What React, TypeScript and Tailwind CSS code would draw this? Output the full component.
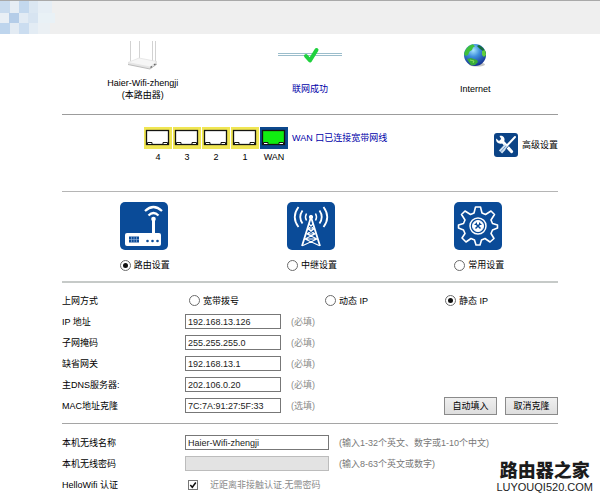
import React from "react";

const radioClass =
  "m-0 grid h-[11px] w-[11px] shrink-0 appearance-none place-items-center rounded-full border border-[#6b6b6b] bg-white before:h-[5px] before:w-[5px] before:rounded-full checked:before:bg-[#111]";

function CornerMosaic() {
  return (
    <svg width="60" height="33" viewBox="0 0 60 33" aria-hidden="true">
      <rect width="10" height="12" fill="#c9dbee" />
      <rect x="10" width="9" height="12" fill="#e6edf4" />
      <rect x="19" width="10" height="12" fill="#c3d8ee" />
      <rect x="29" width="9" height="12" fill="#dbe7f2" />
      <rect x="38" width="14" height="12" fill="#e6eef5" />
      <rect y="12" width="9" height="10" fill="#e9eff5" />
      <rect x="9" y="12" width="10" height="10" fill="#b5cde8" />
      <rect x="19" y="12" width="9" height="10" fill="#e2ebf4" />
      <rect x="28" y="12" width="10" height="10" fill="#d7e4f1" />
      <rect x="38" y="12" width="17" height="10" fill="#e9f1f6" />
      <rect y="22" width="10" height="11" fill="#bed5ed" />
      <rect x="10" y="22" width="9" height="11" fill="#e3ebf3" />
      <rect x="19" y="22" width="10" height="11" fill="#cbddf0" />
      <rect x="29" y="22" width="9" height="11" fill="#e3ecf4" />
      <rect x="38" y="22" width="12" height="11" fill="#ebf0f4" />
    </svg>
  );
}

function RouterPicture() {
  return (
    <svg width="32" height="30" viewBox="0 0 32 30" aria-hidden="true" fill="none">
      <path d="M3.500 1v20M12.500 1v18M25.500 1v22M28.500 1v21" stroke="#d2d2d2" strokeWidth="1" />
      <path d="M1 22.500 12 18l18 3.500L23 27z" fill="#f6f6f6" stroke="#e0e0e0" strokeWidth=".7" />
      <path d="M1 22.500v2L23 29l7-5.500v-2L23 27z" fill="#e4e4e4" />
      <path d="M1 24.500 23 29l7-5" stroke="#b5b5b5" strokeWidth=".9" />
      <path d="m23.500 27.500 1.500-1m2-1.500 1.500-1" stroke="#666" strokeWidth="1.500" />
    </svg>
  );
}

function LinkPicture() {
  return (
    <svg width="66" height="18" viewBox="0 0 66 18" aria-hidden="true" fill="none">
      <path d="M1 6.500h64M1 8.500h64" stroke="#9bbdcb" />
      <path d="m29 9 4 4.500L39.500 3" stroke="#20d13e" strokeWidth="4" strokeLinecap="round" strokeLinejoin="round" />
    </svg>
  );
}

function Globe() {
  return (
    <svg width="24" height="24" viewBox="0 0 24 24" aria-hidden="true">
      <defs>
        <radialGradient id="sea" cx=".42" cy=".28" r=".75">
          <stop offset="0" stopColor="#a9e6ff" />
          <stop offset=".4" stopColor="#3e8fdc" />
          <stop offset="1" stopColor="#122c8c" />
        </radialGradient>
      </defs>
      <ellipse cx="14" cy="21.500" rx="8" ry="2" fill="#c4c4c4" />
      <circle cx="12" cy="12" r="11" fill="url(#sea)" />
      <path d="M2 8C4 4 7 1.500 10 1.200l2 2-2 1.300L9 7 6.500 8.500 5 12 2.500 13 1 11z" fill="#3fc03c" />
      <path d="m14 3 2-1c4 2 6.500 5 7 9l-1.500 3L19 11l1-3-3-2z" fill="#166d3c" />
      <path d="m19 8 3-1 1 5-2 2-2-2z" fill="#60ce3c" />
      <path d="m4 16 4-1 6 2 1 2-3 3-4 .3z" fill="#38ac3a" />
      <path d="m7 17 4 1-1 2" fill="none" stroke="#8be05a" />
    </svg>
  );
}

function Port({ label, wan = false }: { label: string; wan?: boolean }) {
  return (
    <div className="flex flex-col items-center">
      <svg width="28" height="22" viewBox="0 0 28 22" aria-hidden="true">
        <rect width="28" height="22" fill={wan ? "#0c488d" : "#f0e653"} />
        <rect x="2.500" y="3.500" width="22" height="14" fill={wan ? "#11ed11" : "#fff"} stroke="#151510" strokeWidth="1.300" />
        <path d="M3.500 17v-1.500h4.500v1.500m11 0v-1.500h4.500v1.500" fill="#fff" stroke="#151510" />
      </svg>
      <span className="mt-px leading-[14px]">{label}</span>
    </div>
  );
}

function ToolsIcon() {
  return (
    <svg width="24" height="24" viewBox="0 0 24 24" aria-hidden="true" fill="none">
      <rect width="24" height="24" rx="3" fill="#0b4386" />
      <path d="m8 8 9.500 10.500" stroke="#fff" strokeWidth="3.200" strokeLinecap="round" />
      <path d="M5.500 3c3-.8 5.500 1.500 5 4.500l-2.500 3C4.500 11.500 1.500 9 2.200 5.500L5 8l2.200-2z" fill="#fff" />
      <path d="m21 4-7.500 8" stroke="#fff" strokeWidth="2" strokeLinecap="round" />
      <path d="m12.500 12.500-6 6.500" stroke="#d3e3f2" strokeWidth="4.400" />
      <path d="m11.700 13.300-5 5.500" stroke="#5f8cbd" strokeWidth=".9" />
      <path d="m15 12.500-3.500 4" stroke="#0b4386" strokeWidth=".8" />
    </svg>
  );
}

function RouteIcon() {
  return (
    <svg width="48" height="48" viewBox="0 0 48 48" aria-hidden="true" fill="none">
      <rect width="48" height="48" rx="5" fill="#0a4b98" />
      <rect x="5" y="31" width="36" height="13" rx="2" fill="#fff" />
      <path d="M33.500 18v13" stroke="#fff" strokeWidth="3" />
      <circle cx="33.500" cy="17" r="2.300" fill="#fff" />
      <path d="M28.500 13.500q5-5 10 0M25 9q8.500-8 17 0" stroke="#fff" strokeWidth="2.200" />
      <path d="M9 34.500h10v6H9z" fill="#0a4b98" />
      <path d="M9 37.500h10M11.500 34.500v6m2.500-6v6m2.500-6v6" stroke="#9dbbe0" strokeWidth=".6" />
      <circle cx="27.500" cy="39" r="1.300" fill="#0a4b98" />
      <circle cx="32.500" cy="39" r="1.300" fill="#0a4b98" />
      <circle cx="37.500" cy="39" r="1.300" fill="#0a4b98" />
    </svg>
  );
}

function TowerIcon() {
  return (
    <svg width="48" height="48" viewBox="0 0 48 48" aria-hidden="true" fill="none">
      <rect width="48" height="48" rx="5" fill="#0a4b98" />
      <g stroke="#fff">
        <circle cx="24" cy="15" r="1.700" fill="#fff" />
        <path d="M24 15 15 44M24 15l9 29" strokeWidth="1.800" />
        <path d="m22 22 5 5-7 5 10 5-14 6.500M26 22l-5 5 7 5-10 5 14 6.500M21 27h6M19.500 32h9M18 37h12" strokeWidth="1.100" />
        <path d="M19.500 11.500q-2 3.500 0 7M28.500 11.500q2 3.500 0 7" strokeWidth="1.500" />
        <path d="M15.500 8.500q-4.500 6.500 0 13M32.500 8.500q4.500 6.500 0 13" strokeWidth="1.800" />
        <path d="M11.500 5q-7.500 10 0 20M36.500 5q7.500 10 0 20" strokeWidth="1.800" />
      </g>
    </svg>
  );
}

function GearIcon() {
  return (
    <svg width="48" height="48" viewBox="0 0 48 48" aria-hidden="true" fill="none">
      <rect width="48" height="48" rx="5" fill="#0a4b98" />
      <g stroke="#fff">
        <path
          d="M21.500 5h5l1.500 6 3.500 1.500L37 9l3.500 3.500-3.500 5.500 1.500 3.500 5 1.500v3l-5 2-1.500 3.500 3 5L36 40l-5-3.500-3.500 1.500-1.500 5h-4l-1.500-5-3.500-1.500-5 3.500L8 36l3-4.500L9.500 28l-5-2v-3l5-1.500L11 18l-3.500-5.500L11 9l5.500 3.500L20 11z"
          strokeWidth="1.600"
          strokeLinejoin="round"
        />
        <circle cx="24" cy="24" r="8" strokeWidth="1.500" />
        <circle cx="24" cy="24" r="5.500" fill="#fff" />
      </g>
      <path d="m21.500 21.500 5 5m0-5-5 5" stroke="#0a4b98" strokeWidth="1.500" />
      <path d="M20.500 22.500h2v-2m3 0v2h2" stroke="#0a4b98" />
    </svg>
  );
}

const addressFields = [
  { id: "ip", label: "IP 地址", value: "192.168.13.126", hint: "(必填)" },
  { id: "mask", label: "子网掩码", value: "255.255.255.0", hint: "(必填)" },
  { id: "gateway", label: "缺省网关", value: "192.168.13.1", hint: "(必填)" },
  { id: "dns", label: "主DNS服务器:", value: "202.106.0.20", hint: "(必填)" },
  { id: "mac", label: "MAC地址克隆", value: "7C:7A:91:27:5F:33", hint: "(选填)" },
];

const modes = [
  { label: "路由设置", Icon: RouteIcon },
  { label: "中继设置", Icon: TowerIcon },
  { label: "常用设置", Icon: GearIcon },
];

const buttonClass =
  "h-[18px] w-[53px] border border-[#8a8a8a] bg-linear-to-b from-[#efefef] to-[#dedede] text-center leading-4";

export default function App() {
  return (
    <div className="relative min-h-screen overflow-hidden bg-white font-['Liberation_Sans','Noto_Sans_CJK_SC',sans-serif] text-[9px] leading-3 text-black">
      <header className="h-[34px] border-t border-[#a9a9a9] bg-[#efefef]">
        <CornerMosaic />
      </header>

      <main className="mr-[42px] ml-[62px]">
        <section className="grid h-[81px] grid-cols-3 border-b border-[#9c9c9c] pt-1.5 text-center">
          <div className="flex flex-col items-center pr-1">
            <RouterPicture />
            <p className="mt-[7px] leading-3">
              Haier-Wifi-zhengji
              <br />
              (本路由器)
            </p>
          </div>
          <div className="flex flex-col items-center pt-[7px]">
            <LinkPicture />
            <p className="mt-[18px] text-[#0000a8]">联网成功</p>
          </div>
          <div className="flex flex-col items-center pt-[3px]">
            <Globe />
            <p className="mt-4">Internet</p>
          </div>
        </section>

        <section className="flex h-[77px] items-start border-b border-[#b5b5b5] pt-3">
          <div className="ml-[82px] flex gap-px">
            <Port label="4" />
            <Port label="3" />
            <Port label="2" />
            <Port label="1" />
            <Port label="WAN" wan />
          </div>
          <p className="mt-[5px] ml-1 text-[#0000a8]">WAN 口已连接宽带网线</p>
          <a href="#advanced" className="mt-1.5 ml-auto flex items-center gap-1">
            <ToolsIcon />
            高级设置
          </a>
        </section>

        <section className="h-[91px] border-b-2 border-[#c6cac8] pt-2.5">
          <div className="-mr-1.5 grid grid-cols-3">
            {modes.map(({ label, Icon }, index) => (
              <label key={label} className="mx-auto flex w-[52px] flex-col gap-[9px]">
                <Icon />
                <span className="flex items-center gap-[3px] whitespace-nowrap">
                  <input type="radio" name="mode" defaultChecked={index === 0} className={radioClass} />
                  {label}
                </span>
              </label>
            ))}
          </div>
        </section>

        <form>
          <div className="border-b border-[#a5a5a5] pt-[7px] pb-[7px]">
            <div role="radiogroup" aria-label="上网方式" className="flex h-[21px] items-center">
              <span className="w-[127px]">上网方式</span>
              <label className="flex w-[136px] items-center gap-[3px]">
                <input type="radio" name="wan" className={radioClass} />
                宽带拨号
              </label>
              <label className="flex w-[120px] items-center gap-[3px]">
                <input type="radio" name="wan" className={radioClass} />
                动态 IP
              </label>
              <label className="flex items-center gap-[3px]">
                <input type="radio" name="wan" defaultChecked className={radioClass} />
                静态 IP
              </label>
            </div>
            {addressFields.map((field) => (
              <div key={field.id} className="flex h-[21px] items-center">
                <label htmlFor={field.id} className="w-[123px]">
                  {field.label}
                </label>
                <input
                  id={field.id}
                  defaultValue={field.value}
                  className="h-[15px] w-24 border border-[#777] px-0.5 text-[#222]"
                />
                <span className="ml-2.5 text-[#8a8a8a]">{field.hint}</span>
                {field.id === "mac" && (
                  <span className="ml-auto flex gap-2">
                    <button type="button" className={buttonClass}>
                      自动填入
                    </button>
                    <button type="button" className={buttonClass}>
                      取消克隆
                    </button>
                  </span>
                )}
              </div>
            ))}
          </div>

          <div className="pt-2">
            <div className="flex h-[21px] items-center">
              <label htmlFor="ssid" className="w-[123px]">
                本机无线名称
              </label>
              <input
                id="ssid"
                defaultValue="Haier-Wifi-zhengji"
                className="h-[15px] w-36 border border-[#777] px-0.5 text-[#222]"
              />
              <span className="ml-2.5 text-[#777]">(输入1-32个英文、数字或1-10个中文)</span>
            </div>
            <div className="flex h-[21px] items-center">
              <label htmlFor="key" className="w-[123px]">
                本机无线密码
              </label>
              <input id="key" disabled className="h-[15px] w-36 border border-[#bcbcbc] bg-[#e3e3e3] px-0.5" />
              <span className="ml-2.5 text-[#777]">(输入8-63个英文或数字)</span>
            </div>
            <div className="flex h-[21px] items-center">
              <label htmlFor="hello" className="w-[126px]">
                HelloWifi 认证
              </label>
              <span className="grid h-2.5 w-2.5 place-items-center">
                <input
                  id="hello"
                  type="checkbox"
                  defaultChecked
                  className="peer col-start-1 row-start-1 m-0 h-2.5 w-2.5 appearance-none border border-[#777] bg-white"
                />
                <svg
                  viewBox="0 0 10 10"
                  aria-hidden="true"
                  className="pointer-events-none invisible col-start-1 row-start-1 h-2.5 w-2.5 peer-checked:visible"
                >
                  <path d="m2.300 5 2 2.200L7.800 2.500" fill="none" stroke="#111" strokeWidth="1.500" />
                </svg>
              </span>
              <span className="ml-3 text-[#8a8a8a]">近距离非接触认证.无需密码</span>
            </div>
          </div>
        </form>
      </main>

      <div className="absolute right-[7px] bottom-[7px] text-center text-[#1c1c1c]">
        <p className="text-[18px] leading-5 font-black">路由器之家</p>
        <p className="text-[11px] leading-3">LUYOUQI520.COM</p>
      </div>
    </div>
  );
}
